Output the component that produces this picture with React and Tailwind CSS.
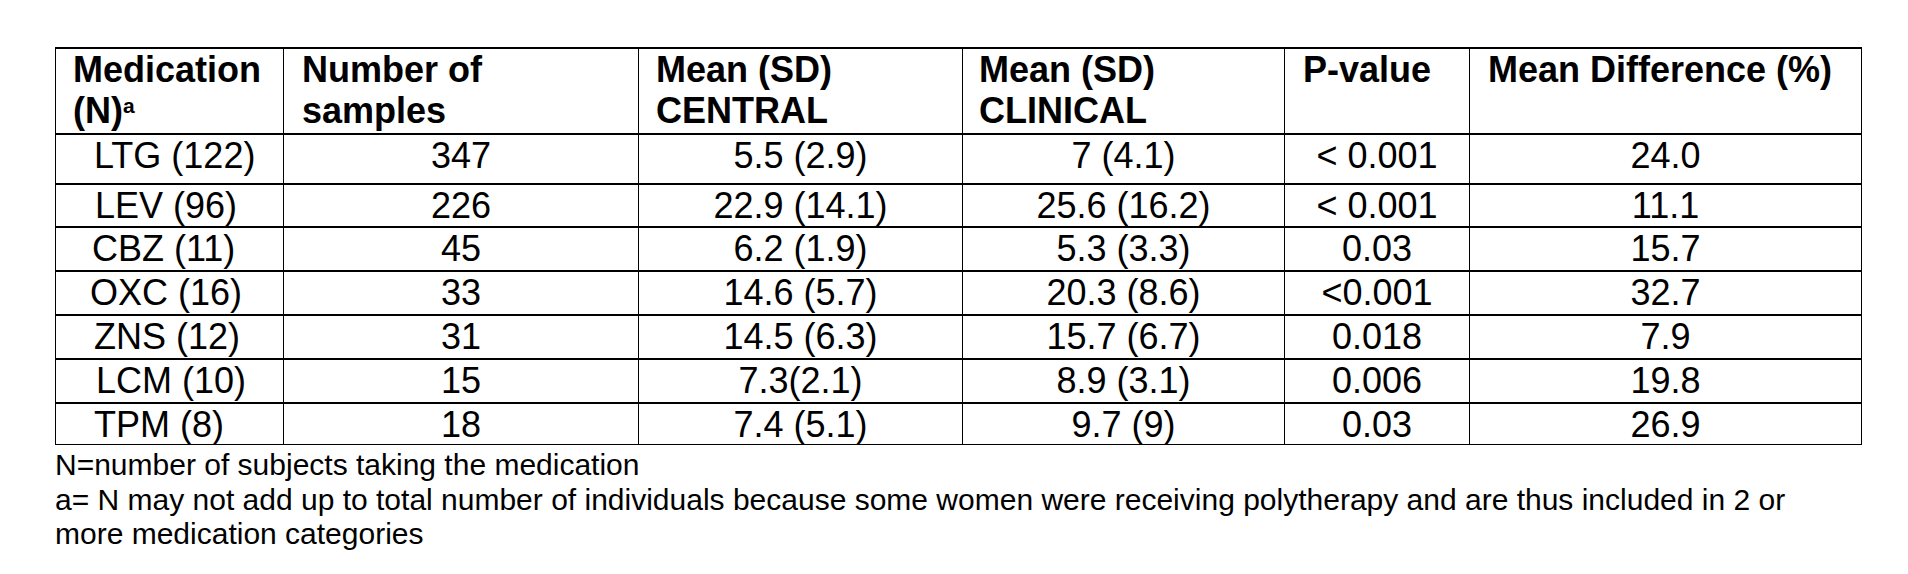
import React from "react";

const cols = "grid grid-cols-[228px_355px_324px_322px_185px_391px]";

const rows = [
  { med: "LTG (122)", pad: "pl-[38px]", h: "h-[50px]", n: "347", central: "5.5 (2.9)", clinical: "7 (4.1)", p: "< 0.001", diff: "24.0" },
  { med: "LEV (96)", pad: "pl-[39px]", h: "h-[43px]", n: "226", central: "22.9 (14.1)", clinical: "25.6 (16.2)", p: "< 0.001", diff: "11.1" },
  { med: "CBZ (11)", pad: "pl-[36px]", h: "h-[44px]", n: "45", central: "6.2 (1.9)", clinical: "5.3 (3.3)", p: "0.03", diff: "15.7" },
  { med: "OXC (16)", pad: "pl-[34px]", h: "h-[44px]", n: "33", central: "14.6 (5.7)", clinical: "20.3 (8.6)", p: "<0.001", diff: "32.7" },
  { med: "ZNS (12)", pad: "pl-[38px]", h: "h-[44px]", n: "31", central: "14.5 (6.3)", clinical: "15.7 (6.7)", p: "0.018", diff: "7.9" },
  { med: "LCM (10)", pad: "pl-[40px]", h: "h-[44px]", n: "15", central: "7.3(2.1)", clinical: "8.9 (3.1)", p: "0.006", diff: "19.8" },
  { med: "TPM (8)", pad: "pl-[38px]", h: "h-[42px]", n: "18", central: "7.4 (5.1)", clinical: "9.7 (9)", p: "0.03", diff: "26.9" },
];

const App = () => {
  return (
    <div className="min-h-screen bg-white text-black font-['Liberation_Sans',Arial,sans-serif]">
      <div className="pt-[47px] pl-[55px] w-[1862px]">
        {/* Table */}
        <div className="border-l border-r border-b border-black text-[36px] leading-[1.15]">
          {/* Header */}
          <div className={`${cols} h-[86px] border-t-2 border-black font-bold`}>
            <div className="border-r border-black pl-[17px]">
              Medication
              <br />
              (N)<sup className="text-[21px]">a</sup>
            </div>
            <div className="border-r border-black pl-[18px]">
              Number of
              <br />
              samples
            </div>
            <div className="border-r border-black pl-[17px]">
              Mean (SD)
              <br />
              CENTRAL
            </div>
            <div className="border-r border-black pl-[16px]">
              Mean (SD)
              <br />
              CLINICAL
            </div>
            <div className="border-r border-black pl-[18px]">P-value</div>
            <div className="pl-[18px]">Mean Difference (%)</div>
          </div>

          {/* Body rows */}
          {rows.map((r) => (
            <div key={r.med} className={`${cols} ${r.h} border-t-2 border-black`}>
              <div className={`border-r border-black ${r.pad} whitespace-nowrap`}>{r.med}</div>
              <div className="border-r border-black text-center">{r.n}</div>
              <div className="border-r border-black text-center whitespace-nowrap">{r.central}</div>
              <div className="border-r border-black text-center whitespace-nowrap">{r.clinical}</div>
              <div className="border-r border-black text-center whitespace-nowrap">{r.p}</div>
              <div className="text-center">{r.diff}</div>
            </div>
          ))}
        </div>

        {/* Footnotes */}
        <div className="pt-[3px] text-[30px] leading-[1.15]">
          <p className="whitespace-nowrap">N=number of subjects taking the medication</p>
          <p className="whitespace-nowrap">
            a= N may not add up to total number of individuals because some women were receiving polytherapy and are thus included in 2 or
          </p>
          <p className="whitespace-nowrap">more medication categories</p>
        </div>
      </div>
    </div>
  );
};

export default App;
